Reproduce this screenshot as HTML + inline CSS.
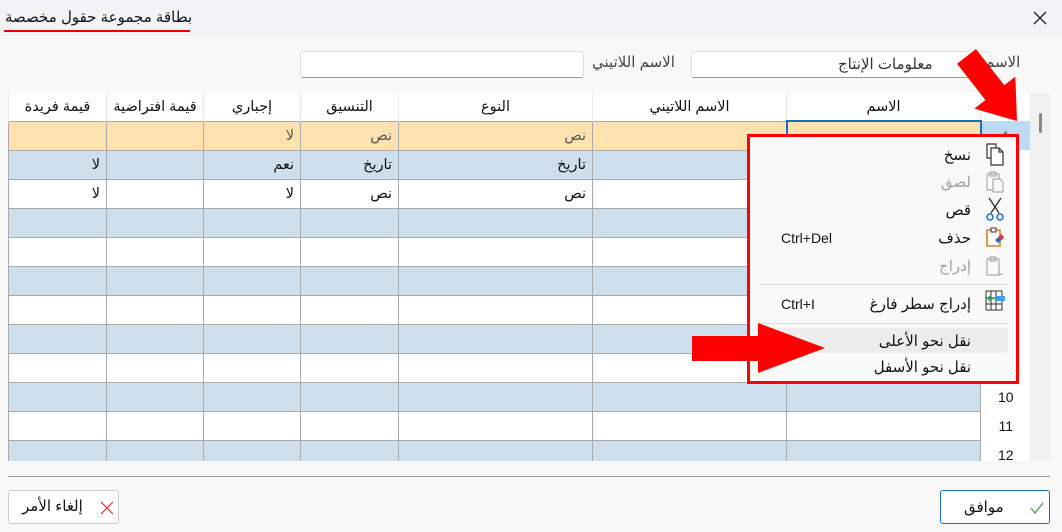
<!DOCTYPE html>
<html><head><meta charset="utf-8"><style>
*{box-sizing:border-box;margin:0;padding:0}
body{width:1062px;height:532px;overflow:hidden;background:#f8f8f8;font-family:"Liberation Sans","DejaVu Sans",sans-serif;font-size:14px;color:#111;position:relative}
.abs{position:absolute}
.title{left:0;top:0;width:1062px;height:36px;background:#f1f3f4}
table{position:absolute;left:8px;top:93px;border-collapse:collapse;table-layout:fixed;direction:ltr}
td{height:29px;border:1px solid #ababab;text-align:right;padding:0 6px;direction:rtl;font-size:14.5px;overflow:hidden;white-space:nowrap}
tr.h td{background:#fff;border:none;border-left:1px solid #e8e8e8;text-align:center;height:28px;font-size:14.5px}
tr.o td{background:#fde2b0;color:#555}
tr.b td{background:#cddfec}
tr.w td{background:#fff}
td.n{background:#fff!important;border:none;text-align:center;font-size:14px;color:#111}
.menu{left:747px;top:134px;width:272px;height:250px;border:3px solid #f00;background:#f9f9f9;direction:rtl}
.mi{position:absolute;right:45px;font-size:15px}
.sc{position:absolute;left:31px;font-size:14px;direction:ltr}
.dis{color:#a0a0a0}
.sep{position:absolute;left:10px;right:8px;height:1px;background:#d8d8d8}
.btn{border:1px solid #ccc;background:#fff;border-radius:3px;height:34px;font-size:14px;direction:rtl}
</style></head><body>
<div class="abs title"></div>
<div class="abs" style="left:5px;top:8px;font-size:15px;direction:rtl">بطاقة مجموعة حقول مخصصة</div>
<div class="abs" style="left:4px;top:30px;width:186px;height:2px;background:#e00"></div>
<svg class="abs" style="left:1032px;top:10px" width="16" height="16"><path d="M2 2L14 14M14 2L2 14" stroke="#222" stroke-width="1.3"/></svg>

<div class="abs" style="left:300px;top:51px;width:284px;height:27px;background:#fff;border:1px solid #ddd;border-bottom-color:#999;border-radius:3px"></div>
<div class="abs" style="left:592px;top:53px;font-size:15px;color:#444;direction:rtl">الاسم اللاتيني</div>
<div class="abs" style="left:691px;top:51px;width:300px;height:27px;background:#fff;border:1px solid #ddd;border-bottom-color:#999;border-radius:3px"></div>
<div class="abs" style="left:838px;top:55px;font-size:15px;color:#333;direction:rtl">معلومات الإنتاج</div>
<div class="abs" style="left:985px;top:53px;font-size:15px;color:#444;direction:rtl">الاسم</div>

<table>
<colgroup><col style="width:98px"><col style="width:97px"><col style="width:97px"><col style="width:98px"><col style="width:194px"><col style="width:194px"><col style="width:194px"><col style="width:50px"></colgroup>
<tr class="h"><td>قيمة فريدة</td><td>قيمة افتراضية</td><td>إجباري</td><td>التنسيق</td><td>النوع</td><td>الاسم اللاتيني</td><td>الاسم</td><td class="n"></td></tr>
<tr class="o"><td></td><td></td><td>لا</td><td>نص</td><td>نص</td><td></td><td style="border:2px solid #1a6fc0"></td><td class="n" style="background:#bcdaf2!important">1</td></tr>
<tr class="b"><td>لا</td><td></td><td>نعم</td><td>تاريخ</td><td>تاريخ</td><td></td><td></td><td class="n">2</td></tr>
<tr class="w"><td>لا</td><td></td><td>لا</td><td>نص</td><td>نص</td><td></td><td></td><td class="n">3</td></tr>
<tr class="b"><td></td><td></td><td></td><td></td><td></td><td></td><td></td><td class="n">4</td></tr>
<tr class="w"><td></td><td></td><td></td><td></td><td></td><td></td><td></td><td class="n">5</td></tr>
<tr class="b"><td></td><td></td><td></td><td></td><td></td><td></td><td></td><td class="n">6</td></tr>
<tr class="w"><td></td><td></td><td></td><td></td><td></td><td></td><td></td><td class="n">7</td></tr>
<tr class="b"><td></td><td></td><td></td><td></td><td></td><td></td><td></td><td class="n">8</td></tr>
<tr class="w"><td></td><td></td><td></td><td></td><td></td><td></td><td></td><td class="n">9</td></tr>
<tr class="b"><td></td><td></td><td></td><td></td><td></td><td></td><td></td><td class="n">10</td></tr>
<tr class="w"><td></td><td></td><td></td><td></td><td></td><td></td><td></td><td class="n">11</td></tr>
<tr class="b"><td></td><td></td><td></td><td></td><td></td><td></td><td></td><td class="n">12</td></tr>
</table>
<div class="abs" style="left:0;top:461px;width:1062px;height:71px;background:#f8f8f8"></div>
<div class="abs" style="left:1030px;top:93px;width:20px;height:368px;background:#f0f0f0"></div>
<div class="abs" style="left:1039px;top:113px;width:3px;height:20px;background:#888;border-radius:2px"></div>
<div class="abs" style="left:8px;top:476px;width:1042px;height:1px;background:#999"></div>

<div class="abs menu">
<div class="mi" style="top:9px">نسخ</div>
<div class="mi dis" style="top:36px">لصق</div>
<div class="mi" style="top:64px">قص</div>
<div class="mi" style="top:92px">حذف</div><div class="sc" style="top:93px">Ctrl+Del</div>
<div class="mi dis" style="top:120px">إدراج</div>
<div class="sep" style="top:147px"></div>
<div class="mi" style="top:158px">إدراج سطر فارغ</div><div class="sc" style="top:159px">Ctrl+I</div>
<div class="sep" style="top:186px"></div>
<div class="abs" style="left:10px;right:8px;top:191px;height:25px;background:#ececec;border-radius:3px"></div>
<div class="mi" style="top:195px">نقل نحو الأعلى</div>
<div class="mi" style="top:221px">نقل نحو الأسفل</div>
<svg class="abs" style="right:8px;top:5px" width="24" height="140">
<g fill="none" stroke="#333" stroke-width="1.2"><path d="M3 2h9v14H3z"/><path d="M7 6h8l4 4v13H7z" fill="#fff"/><path d="M15 6v4h4"/></g>
<g fill="none" stroke="#aaa" stroke-width="1.2"><path d="M3 32h12v16H3z"/><path d="M6 30h6v4H6z"/><path d="M9 37h7l3 3v10H9z" fill="#f9f9f9"/></g>
<g fill="none" stroke="#222" stroke-width="1.2"><path d="M5 56l10 15M17 56L7 71"/></g><circle cx="6" cy="75" r="3" fill="none" stroke="#1a6fc0" stroke-width="1.5"/><circle cx="16" cy="75" r="3" fill="none" stroke="#1a6fc0" stroke-width="1.5"/>
<path d="M3 88h13v16H3z" fill="#fff" stroke="#d0842a" stroke-width="1.6"/><path d="M7 86h5v4H7z" fill="#fff" stroke="#333"/><path d="M11 98l6-5 3 3-6 5z" fill="#1a6fc0"/><path d="M14 95l3-3 3 3-3 3z" fill="#e33"/>
<g fill="none" stroke="#aaa" stroke-width="1.2"><path d="M3 117h12v16H3z"/><path d="M6 115h6v4H6z"/><path d="M15 128v4h4"/></g>
</svg>
<svg class="abs" style="right:8px;top:152px" width="24" height="24"><g fill="none" stroke="#333"><path d="M2 2h16v19H2zM2 9h16M2 15h16M7 2v19M12 2v19"/></g><rect x="11" y="7" width="10" height="5" fill="#4a9ae0"/><path d="M4 9.5h7M6 7l-2 2.5 2 2.5" stroke="#2a9a4a" fill="none" stroke-width="1.3"/></svg>
</div>

<svg class="abs" style="left:0;top:0" width="1062" height="532">
<polygon fill="#f00" points="692,336 758,336 758,323 825,348 758,373 758,361 692,361"/>
<g transform="translate(1017,121) rotate(52)"><polygon fill="#f00" points="-82,-12 -36,-12 -36,-26 0,0 -36,26 -36,12 -82,12"/></g>
</svg>

<div class="abs btn" style="left:8px;top:490px;width:111px"></div>
<svg class="abs" style="left:100px;top:501px" width="14" height="14"><path d="M1 1L13 13M13 1L1 13" stroke="#e03030" stroke-width="1.2"/></svg>
<div class="abs" style="left:22px;top:497px;font-size:15px;direction:rtl">إلغاء الأمر</div>
<div class="abs btn" style="left:940px;top:490px;width:110px;border-color:#1a6fc0"></div>
<svg class="abs" style="left:1030px;top:502px" width="14" height="12"><path d="M1 6l4 5 8-10" stroke="#3a9a3a" fill="none" stroke-width="1.2"/></svg>
<div class="abs" style="left:964px;top:498px;font-size:15px;direction:rtl">موافق</div>
</body></html>
